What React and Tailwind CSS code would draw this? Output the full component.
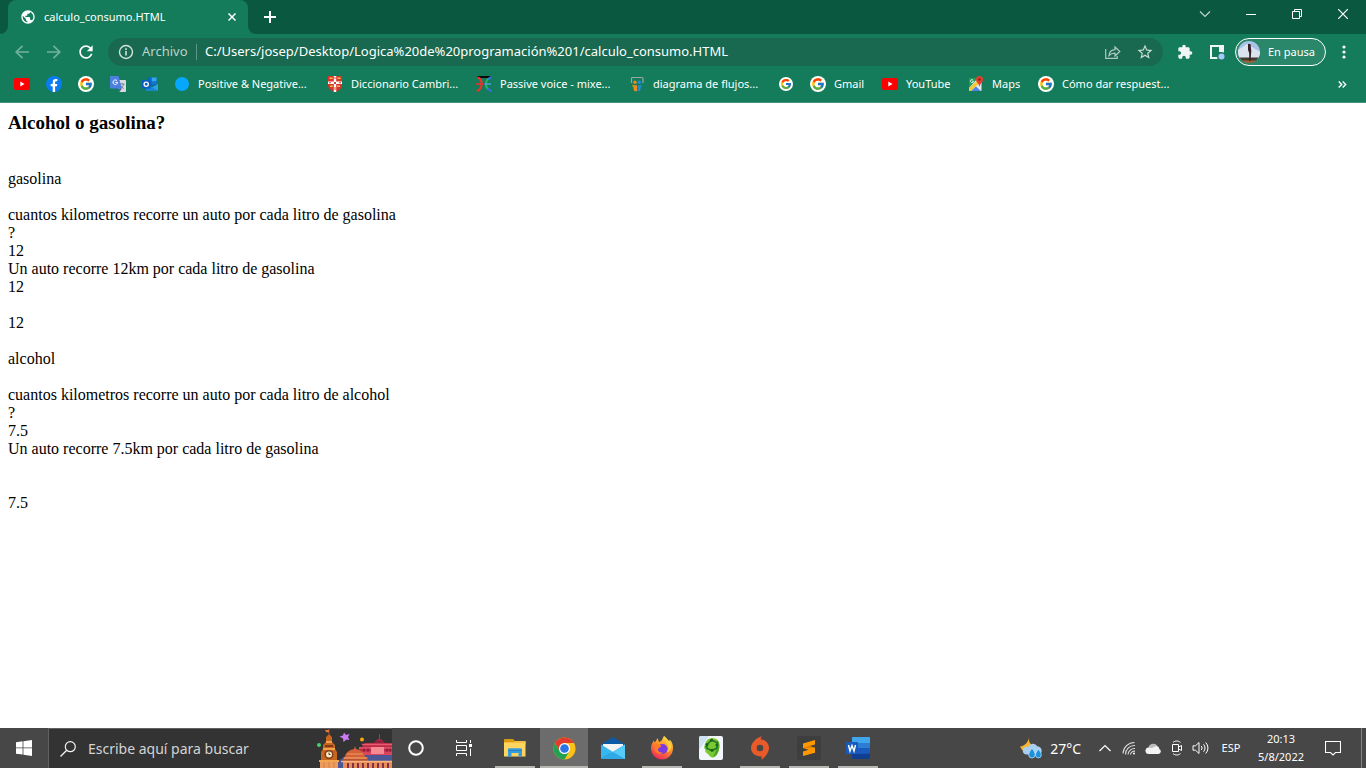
import { FcGoogle } from 'react-icons/fc';
import { MdExtension, MdStarBorder, MdRefresh, MdPublic } from 'react-icons/md';

function YoutubeIcon() {
    return (
        <svg viewBox="0 0 16 16" className="size-4 shrink-0">
            <rect y="2" width="16" height="12" rx="2" fill="#f00" />
            <path d="M6.3 5.5v5l4.2-2.5z" fill="#fff" />
        </svg>
    );
}

function FacebookIcon() {
    return (
        <svg viewBox="0 0 16 16" className="size-4 shrink-0">
            <circle cx="8" cy="8" r="8" fill="#0a7cf2" />
            <path d="M6.7 16v-5.7h-2V8h2V6.3c0-2.1 1.2-3.2 3-3.2.9 0 1.7.1 1.7.1v2h-1c-1 0-1.3.6-1.3 1.2V8h2.2l-.4 2.3H9.1V16z" fill="#fff" />
        </svg>
    );
}

function GoogleIcon({ small }) {
    return (
        <span className="flex size-4 shrink-0 items-center justify-center">
            <span className={small ? 'flex size-3.5 items-center justify-center rounded-full bg-white' : 'flex size-4 items-center justify-center rounded-full bg-white'}>
                <FcGoogle size={small ? 12 : 14} />
            </span>
        </span>
    );
}

function TranslateIcon() {
    return (
        <svg viewBox="0 0 16 16" className="size-4 shrink-0">
            <path d="M6 4h9.2c.5 0 .8.3.8.8v10.400c0 .5-.3.8-.8.8H9.500z" fill="#d7dade" />
            <path d="M9.500 8h5M12 7v1M13.700 8c-.4 2-2 3.800-3.500 4.500M10.800 9.500c.5 1.200 1.700 2.400 3 3" stroke="#6d7a84" strokeWidth=".9" fill="none" />
            <path d="M.8 0h7.700l3.300 12.500H.8c-.5 0-.8-.3-.8-.8V.8C0 .3.3 0 .8 0z" fill="#4d7fe0" />
            <path d="M8.300 12.500h3.500L9.500 16z" fill="#3d5bb0" />
            <path d="M7 4.700A2.300 2.300 0 1 0 7.600 6.400H5.300" stroke="#fff" strokeWidth="1" fill="none" />
        </svg>
    );
}

function OutlookIcon() {
    return (
        <svg viewBox="0 0 16 16" className="size-4 shrink-0">
            <path d="M5 1.500h9.500v8H5z" fill="#0a64c8" />
            <path d="M9.700 1.500h4.800v4H9.700z" fill="#32a9ee" />
            <path d="M9.700 5.500h4.800v3H9.700z" fill="#1278d4" />
            <path d="M4 8l6 3.500L16 8v6.500H4z" fill="#2aa3ea" />
            <path d="M4 8.500l12 6H4z" fill="#1485dc" />
            <rect y="4" width="8.500" height="8.500" rx=".8" fill="#0b5fbe" />
            <circle cx="4.200" cy="8.200" r="2.100" stroke="#fff" strokeWidth="1.300" fill="none" />
        </svg>
    );
}

function BlueDotIcon() {
    return (
        <svg viewBox="0 0 16 16" className="size-4 shrink-0">
            <circle cx="8" cy="8" r="7" fill="#06a8ff" />
        </svg>
    );
}

function ShieldIcon() {
    return (
        <svg viewBox="0 0 16 16" className="size-4 shrink-0">
            <path d="M1 0h14v9c0 3.500-3 5.800-7 7-4-1.200-7-3.500-7-7z" fill="#d8352a" />
            <path d="M6.800 0h2.400v5.500H15v2.500H9.200V16H6.800V8H1V5.500h5.800z" fill="#fff" />
            <path d="M7.500 1h1v2h-1zM7.500 11h1v3h-1zM2 6.300h2v1H2zM12 6.300h2v1h-2zM7 6h2v2H7z" fill="#c9483c" />
            <path d="M2.500 1.500h3V3h-3zM10.500 1.500h3V3h-3zM3 9.500h2.800V11H3zM10.200 9.500H13V11h-2.800z" fill="#f2c14b" />
        </svg>
    );
}

function PassiveIcon() {
    return (
        <svg viewBox="0 0 16 16" className="size-4 shrink-0">
            <path d="M1 0h14l-2 2H3z" fill="#0a0a0a" />
            <path d="M2 1.500C7 4 7 11.500 1 15.500" stroke="#f0302b" strokeWidth="2.200" fill="none" />
            <path d="M0 8h7" stroke="#f0302b" strokeWidth="1.500" />
            <path d="M13.500 2C9 4.500 9 11 12.500 13.500" stroke="#22b868" strokeWidth="2" fill="none" />
            <path d="M8.500 8H15" stroke="#4f9ae6" strokeWidth="1.500" />
            <path d="M15 1l-2.500 2.500M11.500 12.500l4 3" stroke="#3c67f0" strokeWidth="2" />
        </svg>
    );
}

function SlideshareIcon() {
    return (
        <svg viewBox="0 0 16 16" className="size-4 shrink-0">
            <path d="M2.500 7V2.500a1 1 0 0 1 1-1h9.500a1 1 0 0 1 1 1V7" stroke="#9aa5a5" strokeWidth="1.200" fill="none" />
            <circle cx="6" cy="6.300" r="1.700" fill="#f08a1d" />
            <circle cx="10.300" cy="6.300" r="1.700" fill="#1f8fd0" />
            <path d="M3 8.500c2 1.200 3.500.8 5 .8V15c-2 1-3.500 0-3.500-3.500-.8-.8-1.200-1.800-1.500-3z" fill="#f08a1d" />
            <path d="M13.200 8.500c-1.800 1.200-3 .8-4.500.8V15c2 .8 3-.3 3-3.500.8-.8 1.200-1.800 1.500-3z" fill="#1f8fd0" />
        </svg>
    );
}

function MapsIcon() {
    return (
        <svg viewBox="0 0 16 16" className="size-4 shrink-0">
            <path d="M1 2h12v13H1z" fill="#e5e8ea" />
            <path d="M1 2h9L1 12z" fill="#1f9d58" />
            <path d="M1 12L11 3l3 2L3 15H1z" fill="#f6c63b" />
            <path d="M3 15l5-4.500 5 4.500z" fill="#4a86ee" />
            <path d="M8.500 10l5 5V6z" fill="#e5e8ea" />
            <path d="M5.200 4.200A1.500 1.500 0 1 0 5.500 5.400H4.200" stroke="#fff" strokeWidth=".8" fill="none" />
            <path d="M11.500 0A3.500 3.500 0 0 1 15 3.500c0 2.500-2.800 3.500-3.300 7h-.4c-.5-3.500-3.300-4.500-3.300-7A3.500 3.500 0 0 1 11.500 0z" fill="#e2402f" />
            <circle cx="11.500" cy="3.500" r="1.200" fill="#8c1e14" />
        </svg>
    );
}

const bookmarks = [
    { id: 'youtube-short', name: 'YouTube', icon: <YoutubeIcon /> },
    { id: 'facebook', name: 'Facebook', icon: <FacebookIcon /> },
    { id: 'google', name: 'Google', icon: <GoogleIcon /> },
    { id: 'translate', name: 'Traductor', icon: <TranslateIcon /> },
    { id: 'outlook', name: 'Outlook', icon: <OutlookIcon /> },
    { id: 'positive', label: 'Positive & Negative...', width: 'w-[113px]', icon: <BlueDotIcon /> },
    { id: 'diccionario', label: 'Diccionario Cambri...', width: 'w-[109px]', icon: <ShieldIcon /> },
    { id: 'passive', label: 'Passive voice - mixe...', width: 'w-[113px]', icon: <PassiveIcon /> },
    { id: 'diagrama', label: 'diagrama de flujos...', width: 'w-[109px]', icon: <SlideshareIcon /> },
    { id: 'google-2', name: 'Google', icon: <GoogleIcon small /> },
    { id: 'gmail', label: 'Gmail', width: 'w-8', icon: <GoogleIcon /> },
    { id: 'youtube', label: 'YouTube', width: 'w-[46px]', icon: <YoutubeIcon /> },
    { id: 'maps', label: 'Maps', width: 'w-[30px]', icon: <MapsIcon /> },
    { id: 'respuestas', label: 'Cómo dar respuest...', width: 'w-[113px]', icon: <GoogleIcon /> },
];

function TabStrip() {
    return (
        <div className="flex h-[34px] bg-[#0b5840]">
            <svg viewBox="0 0 8 8" className="size-2 self-end" aria-hidden="true">
                <path d="M8 0v8H0a8 8 0 0 0 8-8z" fill="#147c5b" />
            </svg>
            <div className="flex w-60 items-center rounded-t-lg bg-[#147c5b] px-3 text-white">
                <MdPublic size={16} className="shrink-0" />
                <span className="ml-2 flex-1 text-[11px]">calculo_consumo.HTML</span>
                <button aria-label="Cerrar pestaña" className="flex w-2 items-center justify-center">
                    <svg viewBox="0 0 8 8" className="size-2"><path d="M.5.5l7 7M7.500.5l-7 7" stroke="#fff" strokeWidth="1.500" /></svg>
                </button>
            </div>
            <svg viewBox="0 0 8 8" className="size-2 self-end" aria-hidden="true">
                <path d="M0 0v8h8a8 8 0 0 1-8-8z" fill="#147c5b" />
            </svg>
            <button aria-label="Nueva pestaña" className="flex w-7 items-center justify-center">
                <svg viewBox="0 0 12 12" className="size-3"><path d="M6 0v12M0 6h12" stroke="#fff" strokeWidth="2" /></svg>
            </button>
            <div className="ml-auto flex h-7 text-white">
                <button aria-label="Buscar pestañas" className="flex w-[46px] items-center justify-center">
                    <svg viewBox="0 0 12 12" className="size-3"><path d="M1 3.500l5 5 5-5" stroke="#c5d8d0" strokeWidth="1.100" fill="none" /></svg>
                </button>
                <button aria-label="Minimizar" className="flex w-[46px] items-center justify-center">
                    <svg viewBox="0 0 10 10" className="size-2.5"><path d="M0 5.500h10" stroke="#fff" /></svg>
                </button>
                <button aria-label="Restaurar" className="flex w-[46px] items-center justify-center">
                    <svg viewBox="0 0 10 10" className="size-2.5"><path d="M.5 2.500h7v7h-7zM2.500 2.500v-2h7v7h-2" stroke="#fff" fill="none" /></svg>
                </button>
                <button aria-label="Cerrar" className="flex w-[46px] items-center justify-center">
                    <svg viewBox="0 0 10 10" className="size-2.5"><path d="M0 0l10 10M10 0L0 10" stroke="#fff" strokeWidth="1.200" /></svg>
                </button>
            </div>
        </div>
    );
}

function Toolbar() {
    return (
        <div className="flex h-9 items-center gap-1 px-2">
            <button aria-label="Atrás" className="flex size-7 items-center justify-center">
                <svg viewBox="0 0 14 14" className="size-3.5"><path d="M14 7H1.500M7.500.8L1.200 7l6.300 6.200" stroke="#72b09d" strokeWidth="1.700" fill="none" /></svg>
            </button>
            <button aria-label="Adelante" className="flex size-7 items-center justify-center">
                <svg viewBox="0 0 14 14" className="size-3.5"><path d="M0 7h12.500M6.500.8L12.800 7l-6.300 6.200" stroke="#72b09d" strokeWidth="1.700" fill="none" /></svg>
            </button>
            <button aria-label="Recargar" className="flex size-7 items-center justify-center text-white">
                <MdRefresh size={20} />
            </button>
            <div className="ml-1 mr-1 flex h-7 flex-1 items-center gap-1 rounded-full bg-[#18694f] pl-2.5 pr-1">
                <svg viewBox="0 0 16 16" className="size-4 shrink-0">
                    <circle cx="8" cy="8" r="6.500" stroke="#d3e2dc" strokeWidth="1.400" fill="none" />
                    <path d="M8 7v4.500M8 4.300v1.700" stroke="#d3e2dc" strokeWidth="1.600" />
                </svg>
                <label htmlFor="url" className="ml-1 w-[50px] text-[13px] text-[#bcd3cb]">Archivo</label>
                <span className="h-4 w-px bg-[#5d9884]" />
                <input
                    id="url"
                    className="ml-1 min-w-0 flex-1 bg-transparent text-[13px] text-white outline-none"
                    defaultValue="C:/Users/josep/Desktop/Logica%20de%20programación%201/calculo_consumo.HTML"
                />
                <button aria-label="Compartir" className="flex size-7 items-center justify-center">
                    <svg viewBox="0 0 16 16" className="size-4">
                        <path d="M.7 5v9.300h11.500V12M4 11.500c.3-3.500 2.300-5.500 6-5.800V3l4.800 4.500L10 12V9.200c-2.800 0-4.600.7-6 2.300z" stroke="#b0c9c0" strokeWidth="1.200" fill="none" />
                    </svg>
                </button>
                <button aria-label="Marcador" className="flex size-7 items-center justify-center text-[#cbdcd5]">
                    <MdStarBorder size={18} />
                </button>
            </div>
            <button aria-label="Extensiones" className="flex size-7 items-center justify-center text-[#f1f6f4]">
                <MdExtension size={16} />
            </button>
            <button aria-label="Panel lateral" className="flex size-7 items-center justify-center">
                <svg viewBox="0 0 16 16" className="size-4">
                    <path d="M2 2h12v12H2z" stroke="#f1f6f4" strokeWidth="2" fill="none" />
                    <path d="M10 2h4v6h-4z" fill="#f1f6f4" />
                    <circle cx="12.500" cy="12.500" r="4.500" fill="#147c5b" />
                    <circle cx="12.500" cy="12.500" r="3" fill="#a8c7fa" />
                </svg>
            </button>
            <button className="flex h-7 w-[91px] items-center gap-2 rounded-full border border-white bg-[#2b8769] pl-0.5 text-[11px] text-white">
                <svg viewBox="0 0 22 22" className="size-[22px]" aria-hidden="true">
                    <defs>
                        <clipPath id="avatar"><circle cx="11" cy="11" r="11" /></clipPath>
                    </defs>
                    <g clipPath="url(#avatar)">
                        <path d="M0 0h22v22H0z" fill="#a9c3e6" />
                        <path d="M0 9l9-6 13 8v6H0z" fill="#dbe3ef" />
                        <path d="M0 16.500h22V22H0z" fill="#453a2e" />
                        <path d="M4 19.500h15V22H4z" fill="#9a6638" />
                        <path d="M10 3h2.500l.8 7-.8 10h-1.300V12L10 9z" fill="#33202a" />
                    </g>
                </svg>
                En pausa
            </button>
            <button aria-label="Menú" className="flex size-7 items-center justify-center">
                <svg viewBox="0 0 4 14" className="h-3.5 w-1" fill="#fff"><circle cx="2" cy="2" r="1.600" /><circle cx="2" cy="7" r="1.600" /><circle cx="2" cy="12" r="1.600" /></svg>
            </button>
        </div>
    );
}

function BookmarksBar() {
    return (
        <nav className="flex h-[33px] items-center gap-4 border-b border-[#459278] px-3.5 pb-1 text-[11px] text-white">
            {bookmarks.map((b) => (
                <a key={b.id} href="#" aria-label={b.name} className="flex items-center gap-2 whitespace-nowrap">
                    {b.icon}
                    {b.label && <span className={b.width}>{b.label}</span>}
                </a>
            ))}
            <button aria-label="Más marcadores" className="ml-auto flex w-5 justify-center">
                <svg viewBox="0 0 9 7" className="h-[7px] w-[9px]"><path d="M.7.5l3 3-3 3M4.700.5l3 3-3 3" stroke="#fff" strokeWidth="1.400" fill="none" /></svg>
            </button>
        </nav>
    );
}

function FestivalArt() {
    return (
        <svg viewBox="0 0 76 39" className="h-[39px] w-[76px] shrink-0" aria-hidden="true">
            <path d="M22 39V32l9-6h45v13z" fill="#4d5796" />
            <path d="M43 26v-8h3l3-4h10a5 5 0 0 1 4-4V5h1v5a5 5 0 0 1 4 4h8v12z" fill="#b92a48" />
            <path d="M58 14a6 5 0 0 1 11 0z" fill="#8e2440" />
            <path d="M46 15.500h30M43 19h33" stroke="#e85a6e" strokeWidth="1.500" />
            <path d="M43 22.500h33V26H43z" fill="#d9455b" />
            <path d="M48 19.500v3M52 19.500v3M71 19.500v3M74 19.500v3" stroke="#7f1f3b" strokeWidth="1.500" />
            <path d="M55 18h13v7H55z" fill="#f58a93" />
            <path d="M29 28c0-4 4-7 9-8l1-3 1 3c5 1 9 4 9 8z" fill="#d26136" />
            <path d="M31 25h16" stroke="#f39a62" />
            <path d="M27 28h25v4H27z" fill="#b9502f" />
            <path d="M28 29h23" stroke="#f39a62" strokeWidth="1.500" />
            <path d="M27 32h49v7H27z" fill="#e88d58" />
            <path d="M32 34v5M37 34v5M42 34v5M47 34v5M52 34v5M57 34v5M62 34v5M67 34v5M72 34v5" stroke="#823047" strokeWidth="2" />
            <path d="M25 32.500h51" stroke="#f8b47c" strokeWidth="1.500" />
            <path d="M5 32v-9l2-3v-4l3-3V8l3-3 3 3v5l3 3v4l2 3v9z" fill="#c8661f" />
            <path d="M7 20h12M10 13h6" stroke="#ffb95a" strokeWidth="1.500" />
            <path d="M9 17h8" stroke="#7b3b20" strokeWidth="2" />
            <path d="M3 31h20v2H3z" fill="#f5a54e" />
            <path d="M4 33h18v6H4z" fill="#ec9b61" />
            <path d="M8 33v6M13 33v6M18 33v6" stroke="#d9803f" />
            <path d="M13 5V0" stroke="#9d4b32" />
            <path d="M9 1h4v2.500l-3-.5z" fill="#e5763a" />
            <circle cx="13" cy="25.500" r="4.500" fill="#7b3b20" />
            <circle cx="13" cy="25.500" r="3" fill="#ffe9bf" />
            <path d="M13 23.500v2h1.500" stroke="#5a3320" fill="none" />
            <circle cx="3" cy="16" r="2" fill="#45cf74" />
            <circle cx="46" cy="10.500" r="2" fill="#f9a80c" />
            <path d="M28 3.500l2 2.500 3.500-1-1.500 3 1.500 3-3-.5-3 2.500-.5-3.500-3.500-2 3.500-1z" fill="#cf7af5" />
        </svg>
    );
}

function ExplorerIcon() {
    return (
        <svg viewBox="0 0 22 20" className="h-5 w-[22px]">
            <path d="M0 2c0-.6.4-1 1-1h8l2 2h10.500v4H0z" fill="#d99a0b" />
            <path d="M0 4h21.500v14.500H0z" fill="#ffd45f" />
            <path d="M0 4h10l1-1h10.500v2H0z" fill="#f5bf3f" />
            <path d="M4 11.500c0-.8.5-1.300 1.300-1.300h11.400c.8 0 1.300.5 1.300 1.300v7h-3.500V15h-7v3.500H4z" fill="#369bdd" />
            <path d="M4 12.500h14" stroke="#2a83c4" />
        </svg>
    );
}

function ChromeIcon() {
    return (
        <svg viewBox="0 0 48 48" className="size-[23px]">
            <circle cx="24" cy="24" r="23" fill="#fbc116" />
            <path d="M24 1A23 23 0 0 1 44 12.500H24L14 29.500 4 12.500A23 23 0 0 1 24 1z" fill="#e33b2e" />
            <path d="M4 12.500A23 23 0 0 0 24 47l10-17.500-10 5.500-10-5.500z" fill="#22a153" />
            <circle cx="24" cy="24" r="11.500" fill="#fff" />
            <circle cx="24" cy="24" r="9" fill="#2a73e8" />
        </svg>
    );
}

function MailIcon() {
    return (
        <svg viewBox="0 0 24 22" className="h-[22px] w-6">
            <path d="M0 7.500L12 0l12 7.500V12H0z" fill="#0b5aa5" />
            <path d="M2 7h20v9H2z" fill="#f4f4f4" />
            <path d="M0 7.500L12 15 0 22z" fill="#35b8f1" />
            <path d="M24 7.500V22H0z" fill="#2fa9ea" />
            <path d="M24 7.500V22L12 15z" fill="#55cbf8" />
        </svg>
    );
}

function FirefoxIcon() {
    return (
        <svg viewBox="0 0 24 24" className="size-6">
            <defs>
                <linearGradient id="fox" x1=".8" y1="0" x2=".3" y2="1">
                    <stop offset="0" stopColor="#ffe44a" />
                    <stop offset=".45" stopColor="#ff9228" />
                    <stop offset="1" stopColor="#f0255f" />
                </linearGradient>
            </defs>
            <path d="M14 0c3 2 4 4 5 5 0 0 .8-.5.500-1.500 3 2.500 3.800 6 3.500 9.500A11 11 0 0 1 12 23.500 11 11 0 0 1 1 13c0-3 .5-5 2-7l.5-1.500L5 6.500 7.500 2l1.500 4c2 0 3.500-3 5-6z" fill="url(#fox)" />
            <circle cx="12.500" cy="13" r="5" fill="#7a3be0" />
            <path d="M5 8.500c3-.8 5 .3 6.500 1.500-1 2-3.500 1.500-3.500 3.500 0 2 2 3.500 5 3-3 3-8 1-8.500-3z" fill="#ff7a24" />
            <path d="M14 0c-1.500 4 4 6 4.500 11 .3 2-.5 4-2 5.500 3.500-1 5.500-4 4.500-7.500C20 5 16 4 14 0z" fill="#ffcf3c" />
        </svg>
    );
}

function GreenHeadIcon() {
    return (
        <svg viewBox="0 0 24 24" className="size-6">
            <rect width="24" height="24" rx="2" fill="#f3f7fb" />
            <path d="M0 2a2 2 0 0 1 2-2h8L0 14z" fill="#cfe1f3" />
            <path d="M13 2c5 0 8 3.500 7.500 8.500C20 17 17 21.500 13.500 21.500c-2.500 0-3.500-3-6-4.500-1.500-1-1-2.500-1.500-4L5 12l1-4c1-4 3.500-6 7-6z" fill="#7cc832" />
            <path d="M18 4c2.500 2 2.800 5 2 9-1 4-3 7.500-6 8 2-4 4.500-9 4-17z" fill="#4ea52a" />
            <path d="M8 8.500L12.500 4 18 6.500V12l-5 2.500-5-2z" stroke="#1f7a26" strokeWidth="1.600" fill="none" />
            <path d="M8 12.500L6.500 10" stroke="#1f7a26" strokeWidth="1.400" />
            <circle cx="12.500" cy="4.300" r="1.500" fill="#17641f" />
            <circle cx="8" cy="8.500" r="1.500" fill="#17641f" />
            <circle cx="17.800" cy="9" r="1.300" fill="#17641f" />
            <circle cx="13" cy="14.300" r="1.500" fill="#17641f" />
        </svg>
    );
}

function OriginIcon() {
    return (
        <svg viewBox="0 0 20 24" className="h-6 w-5">
            <path d="M12 0c-1 1.500-1.200 2.200-1.200 3.300C15.500 3.500 19 7.500 19 11.800c0 5.200-4.500 10-7.500 12.200.3-1.500.3-2.500-.2-3.500C5 20.500 1 16.500 1 12 1 7 6 2 12 0z" fill="#e75a2a" />
            <circle cx="10" cy="12" r="3.300" fill="#474747" />
        </svg>
    );
}

function SublimeIcon() {
    return (
        <svg viewBox="0 0 24 24" className="size-6">
            <rect width="24" height="24" rx="2" fill="#3e3e3e" />
            <path d="M6 7.500L18 4v4.500L12.500 10l5.500 1.700v5L6 20v-4.500l5.500-1.700L6 12z" fill="#ff9800" />
            <path d="M6 12l12-.3-5.500-1.700z" fill="#d87c00" />
        </svg>
    );
}

function WordIcon() {
    return (
        <svg viewBox="0 0 24 22" className="h-[22px] w-6">
            <rect x="6" width="18" height="22" rx="1" fill="#2b7cd3" />
            <path d="M7 0h16a1 1 0 0 1 1 1v5H6V1a1 1 0 0 1 1-1z" fill="#41a5ee" />
            <path d="M6 11h18v5.500H6z" fill="#185abd" />
            <path d="M6 16.500h18V21a1 1 0 0 1-1 1H7a1 1 0 0 1-1-1z" fill="#103f91" />
            <rect y="5" width="12" height="12" rx="1" fill="#185abd" />
            <path d="M2.500 8l1.500 6 2-5.500 2 5.500 1.500-6" stroke="#fff" strokeWidth="1.400" fill="none" />
        </svg>
    );
}

const apps = [
    { name: 'Explorador de archivos', icon: <ExplorerIcon />, open: true },
    { name: 'Google Chrome', icon: <ChromeIcon />, open: true, active: true },
    { name: 'Correo', icon: <MailIcon /> },
    { name: 'Firefox', icon: <FirefoxIcon />, open: true },
    { name: 'PSeInt', icon: <GreenHeadIcon /> },
    { name: 'Origin', icon: <OriginIcon />, open: true },
    { name: 'Sublime Text', icon: <SublimeIcon />, open: true },
    { name: 'Word', icon: <WordIcon />, open: true },
];

function AppButton({ app }) {
    return (
        <button aria-label={app.name} className={app.active ? 'flex w-12 flex-col items-center bg-[#6c6c6c]' : 'flex w-12 flex-col items-center'}>
            <span className="flex h-[38px] items-center pt-0.5">{app.icon}</span>
            {app.open && <span className={app.active ? 'h-0.5 w-full bg-[#b8b6b2]' : 'h-0.5 w-10 bg-[#b8b6b2]'} />}
        </button>
    );
}

function Tray() {
    return (
        <div className="ml-auto flex items-center text-white">
            <button className="mr-3 flex items-center gap-2 text-[14px]">
                <svg viewBox="0 0 22 22" className="size-[22px]" aria-hidden="true">
                    <path d="M9 0c-.5 4 .5 7 4.500 9-1 4-5 6-8.500 5.500C3 14 1 12 0 9.500 5 9 8.500 5 9 0z" fill="#f6b52c" />
                    <path d="M6.500 17.500a4 4 0 0 1-1-7.800c1-.3 2-.2 2.800.2a5 5 0 0 1 9-.7c2.700.3 4.400 2.200 4.400 4.300a4 4 0 0 1-4 4z" fill="#a9cdf0" />
                    <path d="M12 11c-2 3-3.300 4.800-3.300 6.800a3.200 3.200 0 0 0 6.500 0c0-2-1.200-3.800-3.200-6.800zM18.500 12c-1.800 2.600-3 4.200-3 6a2.900 2.900 0 0 0 5.800 0c0-1.800-1-3.400-2.800-6z" fill="#1c92dc" stroke="#cfe6fa" strokeWidth=".7" />
                </svg>
                27°C
            </button>
            <button aria-label="Iconos ocultos" className="flex w-6 justify-center">
                <svg viewBox="0 0 12 8" className="h-2 w-3"><path d="M.5 7L6 1.500 11.500 7" stroke="#fff" strokeWidth="1.200" fill="none" /></svg>
            </button>
            <button aria-label="Red" className="flex w-6 justify-center">
                <svg viewBox="0 0 14 14" className="size-3.5" stroke="#ddd" fill="none">
                    <path d="M1 12.500A11.500 11.500 0 0 1 12.500 1.500M3.500 13.500A9 9 0 0 1 13 4.500M6 13.500a6.500 6.500 0 0 1 7-6M8.500 13.500A4 4 0 0 1 13 10.200" strokeWidth="1.100" />
                    <circle cx="12" cy="12.500" r="1" fill="#fff" stroke="none" />
                </svg>
            </button>
            <button aria-label="OneDrive" className="flex w-6 justify-center">
                <svg viewBox="0 0 16 11" className="h-[11px] w-4">
                    <path d="M3.500 4.500A5 5 0 0 1 12.500 3c-3 1-5 2-7 5z" fill="#bcbcbc" />
                    <path d="M3.500 11A3.300 3.300 0 0 1 3 4.500c1.500-.2 2.700 0 3.500.8L11 3c2.500 0 3.500 2 3.200 3A2.600 2.600 0 0 1 13.500 11z" fill="#f3f3f3" />
                </svg>
            </button>
            <button aria-label="Reunirse ahora" className="flex w-6 justify-center">
                <svg viewBox="0 0 12 16" className="h-4 w-3" stroke="#fff" fill="none">
                    <path d="M1.500 4.500h6v7h-6zM7.500 7l3-1.500v5l-3-1.500M2 2.500c2-2 5.500-2 7.500 0M2 13.500c2 2 5.500 2 7.500 0" />
                </svg>
            </button>
            <button aria-label="Volumen" className="flex w-6 justify-center">
                <svg viewBox="0 0 18 14" className="h-3.5 w-[18px]" stroke="#fff" fill="none">
                    <path d="M1 4.800h2.500L7 1.500v11L3.500 9.200H1zM9.300 5a3 3 0 0 1 0 4M11.500 3.300a5.300 5.300 0 0 1 0 7.400M13.700 1.500a7.800 7.800 0 0 1 0 11" />
                </svg>
            </button>
            <button className="w-9 text-[11px]">ESP</button>
            <button className="ml-1 flex w-14 flex-col items-center text-[11px] leading-[18px]">
                <span>20:13</span>
                <span>5/8/2022</span>
            </button>
            <button aria-label="Notificaciones" className="flex w-12 justify-center">
                <svg viewBox="0 0 16 16" className="size-4"><path d="M.5 1.500h15v11h-5L8 15l-2.500-2.500h-5z" stroke="#fff" strokeWidth="1.100" fill="none" /></svg>
            </button>
            <span className="ml-1 h-10 w-[5px] border-l border-[#838383]" />
        </div>
    );
}

function Taskbar() {
    return (
        <footer className="flex h-10 bg-[#474747]">
            <button aria-label="Inicio" className="flex w-12 items-center justify-center">
                <svg viewBox="0 0 16 16" className="size-4" fill="#fff">
                    <path d="M0 2.200l6.600-.9v6.200H0zM7.400 1.200L16 0v7.500H7.400zM0 8.300h6.600v6.300L0 13.700zM7.400 8.300H16V16l-8.600-1.200z" />
                </svg>
            </button>
            <div className="flex w-[344px] items-center border-l border-t border-[#616161] bg-[#333]">
                <svg viewBox="0 0 16 16" className="ml-[11px] size-4 shrink-0" stroke="#f2f2f2" fill="none">
                    <circle cx="10.300" cy="5.700" r="5" strokeWidth="1.200" />
                    <path d="M6.700 9.300L.5 15.500" strokeWidth="1.300" />
                </svg>
                <input aria-label="Buscar" placeholder="Escribe aquí para buscar" className="ml-3 min-w-0 flex-1 bg-transparent text-[14px] text-[#d4d4d4] outline-none placeholder:text-[#d4d4d4]" />
                <FestivalArt />
            </div>
            <button aria-label="Cortana" className="flex w-12 items-center justify-center">
                <svg viewBox="0 0 16 16" className="size-4"><circle cx="8" cy="8" r="6.800" stroke="#fff" strokeWidth="2" fill="none" /></svg>
            </button>
            <button aria-label="Vista de tareas" className="flex w-12 items-center justify-center">
                <svg viewBox="0 0 16 16" className="size-4" stroke="#fff" fill="none">
                    <path d="M.5 0v2.500h10V0M.5 5.500h10v5H.5zM.5 16v-2.500h10V16M14.500 0v3M14.500 8.500V16" />
                    <path d="M13 4h3v3h-3z" fill="#fff" stroke="none" />
                </svg>
            </button>
            <div className="ml-[3px] flex gap-px">
                {apps.map((app) => (
                    <AppButton key={app.name} app={app} />
                ))}
            </div>
            <Tray />
        </footer>
    );
}

export default function App() {
    return (
        <div className="flex min-h-screen flex-col bg-white font-['Noto_Sans','Open_Sans',sans-serif]">
            <header className="bg-[#147c5b]">
                <TabStrip />
                <Toolbar />
                <BookmarksBar />
            </header>
            <main className="flex-1 px-2 pt-2 font-['Liberation_Serif',serif] text-[16px] leading-[18px] text-black">
                <h3 className="mb-9 text-[19px] font-bold leading-[23px]">Alcohol o gasolina?</h3>
                gasolina
                <br />
                <br />
                cuantos kilometros recorre un auto por cada litro de gasolina
                <br />
                ?
                <br />
                12
                <br />
                Un auto recorre 12km por cada litro de gasolina
                <br />
                12
                <br />
                <br />
                12
                <br />
                <br />
                alcohol
                <br />
                <br />
                cuantos kilometros recorre un auto por cada litro de alcohol
                <br />
                ?
                <br />
                7.5
                <br />
                Un auto recorre 7.5km por cada litro de gasolina
                <br />
                <br />
                <br />
                7.5
            </main>
            <Taskbar />
        </div>
    );
}
